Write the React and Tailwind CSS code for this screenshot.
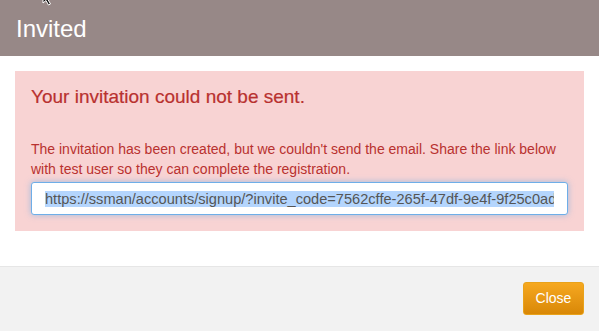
// Invited modal: failed-invitation notice with a shareable signup link

const inviteLink =
  'https://ssman/accounts/signup/?invite_code=7562cffe-265f-47df-9e4f-9f25c0ad0b3e';

function App() {
  return (
    <div
      className="relative w-[599px] h-[332px] overflow-hidden bg-white"
      style={{ fontFamily: '"Liberation Sans", Arial, Helvetica, sans-serif' }}
    >
      {/* Mouse cursor peeking in at the top */}
      <svg className="absolute left-[42px] top-[-8px]" width="12" height="14" viewBox="0 0 12 14">
        <path d="M1 0 L1 11 L4 8.5 L6.5 13 L8.5 12 L6 7.5 L10 7.5 Z" fill="#111" stroke="#fff" strokeWidth="1" />
      </svg>

      {/* Header */}
      <div className="h-[56px] bg-[#978887] px-4 flex items-center">
        <h1 className="text-[24px] leading-none text-white pt-[1px]">Invited</h1>
      </div>

      {/* Body */}
      <div className="px-[15px] pt-[15px] pb-[35px]">
        <div className="bg-[#f8d3d3] p-4 text-[#b8312f]">
          <h2 className="text-[19px] leading-[20px] mb-8 [-webkit-text-stroke:0.2px_#b8312f]">
            Your invitation could not be sent.
          </h2>
          <p className="text-[14px] leading-[20px]">
            The invitation has been created, but we couldn't send the email. Share the link below
            with test user so they can complete the registration.
          </p>
          <div className="mt-[3px] h-[33px] bg-white border border-[#6eaee8] rounded-[3px] shadow-[0_0_6px_rgba(102,175,233,0.6)] px-[13px] flex items-center">
            <div className="overflow-hidden whitespace-nowrap">
              <span className="text-[14.6px] leading-[17px] text-[#555] bg-[#b4d5fd]">{inviteLink}</span>
            </div>
          </div>
        </div>
      </div>

      {/* Footer */}
      <div className="h-[65px] border-t border-[#e6e6e6] bg-[#f2f2f2] px-[15px] pt-[15px] flex justify-end items-start">
        <button className="h-[33px] w-[61px] rounded-[3px] border border-[#e9a21a] bg-gradient-to-b from-[#f6a81f] to-[#d98806] text-white text-[14px]">
          Close
        </button>
      </div>
    </div>
  );
}

export default App;
